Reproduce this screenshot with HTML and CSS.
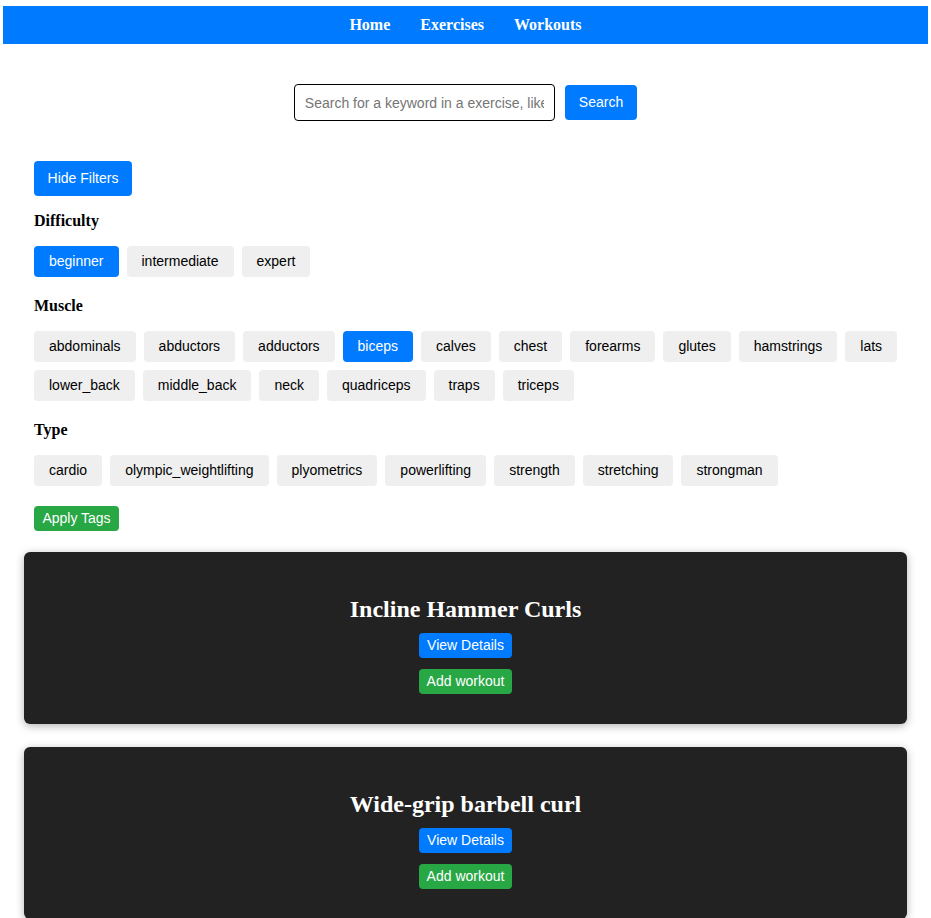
FILE: index.html
```html
<!DOCTYPE html>
<html>
<head>
<meta charset="utf-8">
<title>Exercises</title>
<link rel="stylesheet" href="styles.css">
</head>
<body>
<nav class="navbar">
  <a class="nav-link" href="#">Home</a>
  <a class="nav-link" href="#">Exercises</a>
  <a class="nav-link" href="#">Workouts</a>
</nav>

<div class="search-row">
  <input class="search-input" type="text" placeholder="Search for a keyword in a exercise, like 'curl'">
  <button class="btn btn-blue search-btn">Search</button>
</div>

<section class="filters">
  <button class="btn btn-blue hide-btn">Hide Filters</button>

  <h4 class="filter-title">Difficulty</h4>
  <div class="chips">
    <button class="chip active">beginner</button>
    <button class="chip">intermediate</button>
    <button class="chip">expert</button>
  </div>

  <h4 class="filter-title">Muscle</h4>
  <div class="chips">
    <button class="chip">abdominals</button>
    <button class="chip">abductors</button>
    <button class="chip">adductors</button>
    <button class="chip active">biceps</button>
    <button class="chip">calves</button>
    <button class="chip">chest</button>
    <button class="chip">forearms</button>
    <button class="chip">glutes</button>
    <button class="chip">hamstrings</button>
    <button class="chip">lats</button>
    <button class="chip">lower_back</button>
    <button class="chip">middle_back</button>
    <button class="chip">neck</button>
    <button class="chip">quadriceps</button>
    <button class="chip">traps</button>
    <button class="chip">triceps</button>
  </div>

  <h4 class="filter-title">Type</h4>
  <div class="chips">
    <button class="chip">cardio</button>
    <button class="chip">olympic_weightlifting</button>
    <button class="chip">plyometrics</button>
    <button class="chip">powerlifting</button>
    <button class="chip">strength</button>
    <button class="chip">stretching</button>
    <button class="chip">strongman</button>
  </div>

  <button class="btn btn-green apply-btn">Apply Tags</button>
</section>

<main class="cards">
  <div class="card">
    <h2 class="card-title">Incline Hammer Curls</h2>
    <button class="btn btn-blue card-btn">View Details</button>
    <button class="btn btn-green card-btn">Add workout</button>
  </div>
  <div class="card">
    <h2 class="card-title">Wide-grip barbell curl</h2>
    <button class="btn btn-blue card-btn">View Details</button>
    <button class="btn btn-green card-btn">Add workout</button>
  </div>
</main>
</body>
</html>
```

FILE: styles.css
```css
* {
  box-sizing: border-box;
}

body {
  margin: 0;
  background: #ffffff;
  font-family: "Liberation Serif", "Times New Roman", serif;
  color: #000;
}

.navbar {
  margin: 6px 3px 0;
  height: 38px;
  background: #007bff;
  display: flex;
  justify-content: center;
  align-items: center;
  gap: 30px;
}

.nav-link {
  color: #ffffff;
  text-decoration: none;
  font-family: "Liberation Serif", "Times New Roman", serif;
  font-weight: bold;
  font-size: 16px;
}

.search-row {
  display: flex;
  justify-content: center;
  align-items: center;
  gap: 10px;
  margin-top: 40px;
}

.search-input {
  width: 261px;
  height: 37px;
  border: 1px solid #000;
  border-radius: 4px;
  padding: 0 10px;
  font-family: "Liberation Sans", Arial, sans-serif;
  font-size: 14px;
  color: #000;
  outline: none;
}

.search-input::placeholder {
  color: #757575;
}

.btn {
  border: none;
  border-radius: 4px;
  color: #ffffff;
  font-family: "Liberation Sans", Arial, sans-serif;
  font-size: 14px;
  line-height: 17px;
  white-space: nowrap;
  cursor: pointer;
}

.btn-blue {
  background: #007bff;
}

.btn-green {
  background: #28a745;
}

.search-btn {
  height: 35px;
  padding: 0 14px;
}

.filters {
  padding: 40px 10px 0 34px;
}

.hide-btn {
  display: block;
  height: 35px;
  width: 98px;
  padding: 0;
}

.filter-title {
  margin: 16px 0;
  font-size: 16px;
  line-height: 18px;
  font-weight: bold;
}

.chips {
  display: flex;
  flex-wrap: wrap;
  gap: 8px;
  margin-bottom: 20px;
}

.chip {
  border: none;
  border-radius: 4px;
  background: #efefef;
  color: #000;
  font-family: "Liberation Sans", Arial, sans-serif;
  font-size: 14px;
  line-height: 17px;
  padding: 7px 15px;
  white-space: nowrap;
  cursor: pointer;
}

.chip.active {
  background: #007bff;
  color: #ffffff;
}

.apply-btn {
  display: block;
  height: 25px;
  width: 85px;
  padding: 0;
}

.cards {
  padding: 21px 24px 0;
  display: flex;
  flex-direction: column;
  gap: 23px;
}

.card {
  background: #222222;
  border-radius: 6px;
  box-shadow: 0 2px 8px rgba(0, 0, 0, 0.3);
  padding: 44px 20px 30px;
  display: flex;
  flex-direction: column;
  align-items: center;
}

.card-title {
  margin: 0 0 10px;
  color: #ffffff;
  font-family: "Liberation Serif", "Times New Roman", serif;
  font-size: 24px;
  line-height: 27px;
  font-weight: bold;
}

.card-btn {
  height: 25px;
  padding: 0 8px;
}

.card-btn + .card-btn {
  margin-top: 11px;
}
```
